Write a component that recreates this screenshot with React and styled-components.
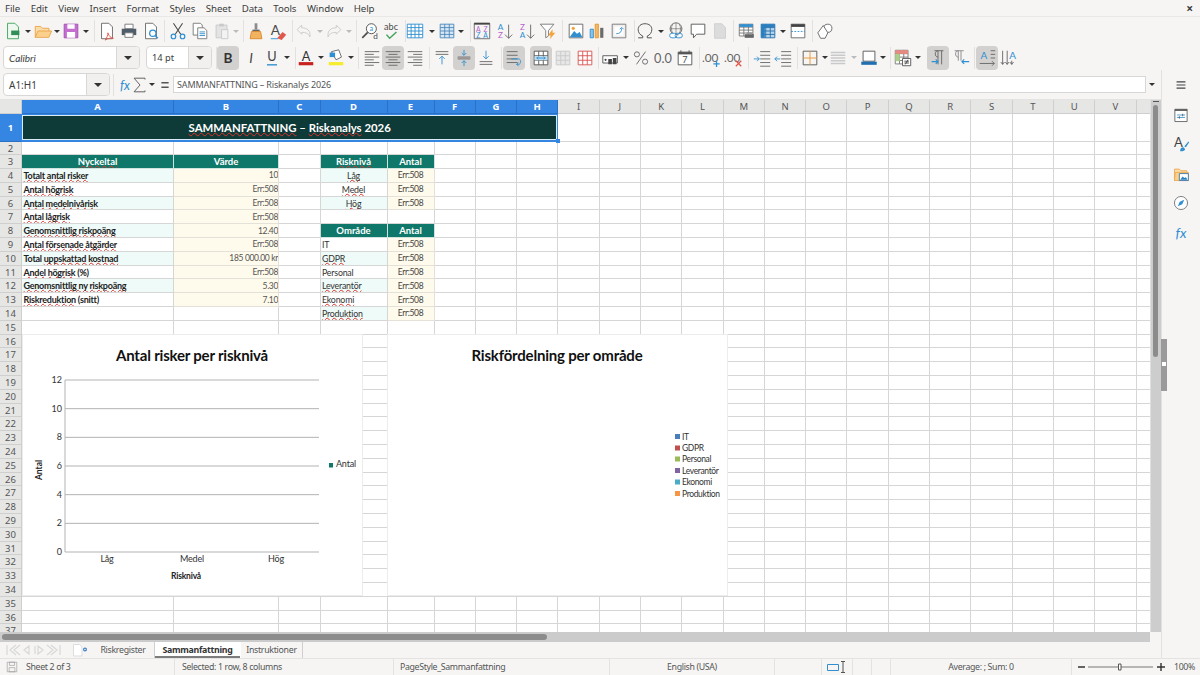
import React from "react";
import styled, { createGlobalStyle } from "styled-components";

const GlobalStyle = createGlobalStyle`
  html, body { margin: 0; padding: 0; background: #f6f5f4; }
  * { box-sizing: border-box; }
`;

const UI_FONT = `"Noto Sans", "Open Sans", sans-serif`;
const CELL_FONT = `Lato, "Noto Sans", sans-serif`;
const DARK = "#4a4a4a";
const BLUE = "#2f8fd1";
const FAINT = "#c9c9c9";

const Page = styled.div`
  width: 1200px;
  height: 675px;
  overflow: hidden;
  display: flex;
  flex-direction: column;
  background: #f6f5f4;
  color: #3d3d3d;
  font-family: ${UI_FONT};
`;

const MenuBar = styled.div`
  height: 17px;
  flex: none;
  display: flex;
  align-items: center;
  gap: 10.5px;
  padding: 0 5px;
  font-size: 9.7px;
  letter-spacing: -0.08px;
  border-bottom: 1px solid #e9e8e6;
`;

const CloseMark = styled.span`
  margin-left: auto;
  margin-right: 2px;
  font-size: 12px;
  font-weight: 700;
`;

const Toolbar = styled.div`
  height: ${(p) => p.$h}px;
  flex: none;
  display: flex;
  align-items: center;
`;

const Slot = styled.div`
  flex: none;
  width: ${(p) => p.$w}px;
  margin-left: ${(p) => p.$gap}px;
  height: 24px;
  display: flex;
  align-items: center;
  justify-content: center;
  border-radius: 4px;
  background: ${(p) => (p.$active ? "#d3d1cf" : "transparent")};
`;

const Caret = styled.span`
  width: 0;
  height: 0;
  border-left: 3px solid transparent;
  border-right: 3px solid transparent;
  border-top: 3.5px solid ${(p) => (p.$off ? "#bbb" : "#333")};
`;

const Sep = styled.span`
  width: 1px;
  height: 22px;
  background: #e2e1df;
`;

const Combo = styled.div`
  flex: none;
  display: flex;
  width: ${(p) => p.$w}px;
  height: 23px;
  margin-left: ${(p) => p.$gap}px;
  background: #fff;
  border: 1px solid #d8d7d5;
  border-radius: 4px;
  overflow: hidden;
`;

const ComboText = styled.div`
  flex: 1;
  display: flex;
  align-items: center;
  padding-left: 5px;
  font-size: ${(p) => p.$size || 10}px;
  font-family: ${(p) => p.$font || UI_FONT};
  font-style: ${(p) => (p.$italic ? "italic" : "normal")};
`;

const ComboButton = styled.div`
  flex: none;
  width: 23px;
  display: flex;
  align-items: center;
  justify-content: center;
  background: #f1f0ee;
  border-left: 1px solid #d8d7d5;
  ${Caret} {
    border-left-width: 4px;
    border-right-width: 4px;
    border-top-width: 4px;
  }
`;

const Body = styled.div`
  flex: 1;
  min-height: 0;
  display: flex;
`;

const WorkArea = styled.div`
  width: 1162px;
  flex: none;
  display: flex;
  flex-direction: column;
  border-right: 1px solid #e2e1df;
`;

const FormulaBar = styled.div`
  height: 30px;
  flex: none;
  display: flex;
  align-items: center;
  border-bottom: 1px solid #e4e3e1;
`;

const FormulaInput = styled.div`
  flex: none;
  width: 973px;
  height: 17px;
  margin-left: -2px;
  padding-left: 3px;
  display: flex;
  align-items: center;
  background: #fff;
  border: 1px solid #d8d7d5;
  font-size: 9px;
  letter-spacing: -0.15px;
  color: #555;
`;

const SheetRow = styled.div`
  flex: 1;
  min-height: 0;
  display: flex;
`;

const SheetPane = styled.div`
  position: relative;
  flex: 1;
  min-width: 0;
  overflow: hidden;
  background: #fff;
`;

const Grid = styled.div`
  display: grid;
  grid-template-columns: 22px 152px 105px 41.5px 67px 47px repeat(18, 41.3px);
  grid-template-rows: 14px 28px 13.3px repeat(35, 13.8px);
  font-family: ${CELL_FONT};
`;

const HeaderCell = styled.div`
  display: flex;
  align-items: center;
  justify-content: center;
  overflow: hidden;
  font-family: ${UI_FONT};
  font-size: 9.5px;
  background: ${(p) => (p.$selected ? "#3585e2" : "#e6e6e5")};
  color: ${(p) => (p.$selected ? "#fff" : "#555")};
  font-weight: ${(p) => (p.$selected ? 700 : 400)};
  border-right: 1px solid ${(p) => (p.$selected ? "#2a70c4" : "#cfcfcf")};
  border-bottom: 1px solid ${(p) => (p.$selected ? "#2a70c4" : "#cfcfcf")};
`;

const Cell = styled.div`
  display: flex;
  align-items: center;
  justify-content: ${(p) => p.$justify || "flex-start"};
  min-width: 0;
  overflow: hidden;
  white-space: nowrap;
  padding: 0 ${(p) => (p.$justify === "flex-end" ? 0 : 1.5)}px;
  font-size: ${(p) => p.$size || 8.8}px;
  letter-spacing: ${(p) => p.$ls ?? -0.2}px;
  font-weight: ${(p) => (p.$bold ? 700 : 400)};
  color: ${(p) => p.$color || "#333"};
  background: ${(p) => p.$bg || "#fff"};
  border-right: 1px solid ${(p) => p.$line || "#d6d6d6"};
  border-bottom: 1px solid ${(p) => p.$line || "#d6d6d6"};
  grid-column: ${(p) => (p.$span ? `span ${p.$span}` : "auto")};
`;

const Spell = styled.span`
  text-decoration: underline wavy #e0302a 1px;
  text-underline-offset: 0;
  text-decoration-skip-ink: none;
`;

const Selection = styled.div`
  position: absolute;
  left: 21px;
  top: 14px;
  width: 537px;
  height: 28px;
  border: 1px solid #3585e2;
  border-bottom-width: 2px;
  box-shadow: inset 0 0 0 1px #d9ecf6;
  pointer-events: none;
  &::after {
    content: "";
    position: absolute;
    right: -3px;
    bottom: -3px;
    width: 4px;
    height: 4px;
    background: #3585e2;
  }
`;

const ChartFrame = styled.svg`
  position: absolute;
  top: 235px;
  left: ${(p) => p.$left}px;
  width: 339px;
  height: 260px;
  background: #fff;
  outline: 1px solid #ececec;
  font-family: ${CELL_FONT};
`;

const VScroll = styled.div`
  position: relative;
  flex: none;
  width: 11px;
  background: #cdcdcd;
  border-left: 1px solid #e0e0e0;
  &::before {
    content: "";
    position: absolute;
    left: 2px;
    top: 1px;
    width: 6px;
    height: 1px;
    background: #555;
  }
`;

const VThumb = styled.div`
  position: absolute;
  left: 2px;
  top: 5px;
  width: 5px;
  height: 252px;
  border-radius: 3px;
  background: #8c8c8c;
`;

const HScroll = styled.div`
  position: relative;
  height: 10px;
  flex: none;
  background: #cbcbcb;
  margin-right: 11px;
`;

const HThumb = styled.div`
  position: absolute;
  left: 2px;
  top: 2px;
  width: 545px;
  height: 6px;
  border-radius: 3px;
  background: #8c8c8c;
`;

const TabBar = styled.div`
  height: 16px;
  flex: none;
  display: flex;
  align-items: stretch;
  font-size: 8.8px;
  letter-spacing: -0.3px;
`;

const TabNav = styled.svg`
  flex: none;
  width: 92px;
  height: 16px;
`;

const Tab = styled.div`
  flex: none;
  width: ${(p) => p.$w}px;
  display: flex;
  align-items: center;
  justify-content: center;
  background: ${(p) => (p.$active ? "#fff" : "transparent")};
  font-weight: ${(p) => (p.$active ? 700 : 400)};
  color: ${(p) => (p.$active ? "#333" : "#555")};
  box-shadow: ${(p) => (p.$active ? "inset 0 -2px 0 #7d7d7d" : "none")};
  border-right: 1px solid ${(p) => (p.$active ? "transparent" : "#cfcfcf")};
`;

const Sidebar = styled.div`
  flex: 1;
  position: relative;
  display: flex;
  flex-direction: column;
  align-items: center;
  padding-top: 4px;
  gap: 7.5px;
`;

const SideIcon = styled.div`
  width: 22px;
  height: 22px;
  display: flex;
  align-items: center;
  justify-content: center;
`;

const SideHandle = styled.div`
  position: absolute;
  left: -1px;
  top: 269px;
  width: 6px;
  height: 52px;
  background: #9a9a9a;
  &::after {
    content: "";
    position: absolute;
    left: 1px;
    top: 23px;
    width: 4px;
    height: 4px;
    background: #fff;
  }
`;

const StatusBar = styled.div`
  height: 17px;
  flex: none;
  display: flex;
  align-items: center;
  border-top: 1px solid #e4e3e1;
  font-size: 8.8px;
  letter-spacing: -0.35px;
  color: #555;
`;

const StatusCell = styled.div`
  flex: none;
  width: ${(p) => p.$w}px;
  height: 100%;
  display: flex;
  align-items: center;
  gap: ${(p) => p.$gapX || 7}px;
  padding-left: ${(p) => p.$pad || 0}px;
  justify-content: ${(p) => (p.$center ? "center" : "flex-start")};
  border-right: ${(p) => (p.$plain ? "none" : "1px solid #e4e3e1")};
`;

const Svg = ({ children, size = 22, vb = "0 0 22 22" }) => (
  <svg width={size} height={size} viewBox={vb} fill="none">
    {children}
  </svg>
);

const hl = (ys, x1, x2) => ys.map((y) => `M${x1} ${y}H${x2}`).join("");
const gridD = (x, y, w, h, nx, ny) => {
  let d = `M${x} ${y}h${w}v${h}h-${w}z`;
  for (let i = 1; i < nx; i++) d += `M${x + (w * i) / nx} ${y}v${h}`;
  for (let i = 1; i < ny; i++) d += `M${x} ${y + (h * i) / ny}h${w}`;
  return d;
};
const T = ({ x, y, s = 9, c = DARK, w = 400, i, children }) => (
  <text x={x} y={y} fontSize={s} fill={c} fontWeight={w} fontStyle={i ? "italic" : "normal"} fontFamily="Lato, sans-serif" textAnchor="middle">
    {children}
  </text>
);

const DOC = "M5 2.5h8L17 6.5v13H5z";

const icons = {
  newDoc: <><path d={DOC} fill="#eef8f0" stroke="#3fa35b" /><path d="M9 10.5h9v5H9z" fill="#2f8f55" /></>,
  open: <><path d="M2.5 18V6h6l2 2h7v3" fill="#fbdca8" stroke="#e8a548" /><path d="M2.5 18l3-7h15l-3 7z" fill="#fbd08c" stroke="#e8a548" /></>,
  save: <><path d="M3.5 3.5h15v15h-15z" fill="#c46fd0" stroke="#a14fb0" /><path d="M7 3.5h8v5H7zM6.5 12h9v6.5h-9z" fill="#fff" /></>,
  pdf: <><path d={DOC} fill="#fff" stroke="#666" /><path d="M12 13c1 4 3 5 6 6-3-.5-6 0-9 2 2-3 3-5 3-8z" stroke="#e2574c" /></>,
  print: <><path d="M6.5 3.5h9v5h-9z" fill="#fff" stroke="#777" /><path d="M3 8.5h16v7H3z" fill="#4f5d6b" /><path d="M6.5 13h9v5h-9z" fill="#fff" stroke="#777" /></>,
  preview: <><path d={DOC} fill="#fff" stroke="#666" /><circle cx="13" cy="13.5" r="3.5" fill="#fff" stroke={BLUE} strokeWidth="1.4" /><path d="M15.5 16l3 3" stroke={BLUE} strokeWidth="1.6" /></>,
  cut: <><path d="M6 2.5l8 12M16 2.5l-8 12" stroke={DARK} strokeWidth="1.2" /><circle cx="6" cy="17" r="2.5" stroke={BLUE} strokeWidth="1.3" /><circle cx="16" cy="17" r="2.5" stroke={BLUE} strokeWidth="1.3" /></>,
  copy: <><path d="M3.5 2.5h8l2 2v11h-10z" fill="#fff" stroke="#777" /><path d="M8.5 7.5h7l3 3v9h-10z" fill="#fff" stroke="#777" /><path d={hl([12, 14, 16], 10.5, 16.5)} stroke={BLUE} /></>,
  paste: <><path d="M4.5 4.5h12v14h-12z" fill="#e4e4e4" stroke={FAINT} /><path d="M8 3h5v3H8z" fill={FAINT} /><path d="M10.5 9.5h7v10h-7z" fill="#f2f2f2" stroke={FAINT} /></>,
  clone: <><path d="M9.5 2.5h3v7h-3z" fill="#8b8b8b" /><path d="M7 9.5h8v2H7z" fill="#666" /><path d="M6 11.5h10l1.5 8h-13z" fill="#f3b25f" stroke="#d9892c" /></>,
  clear: <><T x={8} y={15} s={15}>A</T><path d="M10 19l6-7 4 3-5 6z" fill="#e2574c" /><path d="M3 19.5h8" stroke={BLUE} /></>,
  undo: <path d="M3.5 9.5l5-5v3c6 0 10 3 9 10-1.5-4-5-5-9-5v2z" stroke={FAINT} />,
  redo: <path d="M18.5 9.5l-5-5v3c-6 0-10 3-9 10 1.5-4 5-5 9-5v2z" stroke={FAINT} />,
  find: <><circle cx="12.5" cy="8.5" r="5.5" fill="#fff" stroke={DARK} /><path d="M8.5 12.5l-6 6" stroke={DARK} strokeWidth="1.8" /><T x={12.5} y={11} s={8} c={BLUE}>a</T><T x={17} y={20} s={9}>d</T></>,
  spell: <><T x={11} y={10} s={10}>abc</T><path d="M6 15l3.5 4L17 12" stroke="#45a35c" strokeWidth="1.6" /></>,
  tableGrid: <path d={gridD(2.5, 3.5, 17, 15, 4, 4)} fill="#fff" stroke={BLUE} />,
  colGrid: <path d={gridD(3.5, 3.5, 15, 15, 3, 4)} fill="#d7e9f7" stroke="#4f87b8" />,
  sort: <><path d="M2.5 2.5h17v17h-17z" stroke="#666" /><path d="M2.5 3h17" stroke="#444" strokeWidth="2" /><T x={7} y={12} s={7.5} c="#b364c9">A</T><T x={15} y={12} s={7.5} c="#b364c9">Z</T><T x={7} y={19} s={7.5} c={BLUE}>Z</T><T x={15} y={19} s={7.5} c={BLUE}>A</T></>,
  az: <><T x={6} y={10} s={9} c={BLUE}>A</T><T x={6} y={19} s={9} c="#b364c9">Z</T><path d="M15 4v15m-4-4l4 4 4-4" stroke="#666" /></>,
  za: <><T x={6} y={10} s={9} c="#b364c9">Z</T><T x={6} y={19} s={9} c={BLUE}>A</T><path d="M15 4v15m-4-4l4 4 4-4" stroke="#666" /></>,
  filter: <><path d="M2.5 3.5h15l-6 7v6l-3 2v-8z" fill="#fff" stroke="#777" /><path d="M16 9l-5 7h3l-1 4 6-7h-3z" fill="#f2a33c" /></>,
  image: <><path d="M3.5 3.5h15v15h-15z" fill="#fff" stroke="#666" /><path d="M4 18l5-7 3 3 3-2 3 6z" fill={BLUE} /><circle cx="8" cy="8" r="1.8" fill="#f2a33c" /></>,
  chart: <><path d="M3.5 9H7v9.5H3.5z" fill="#8fc2e6" stroke={BLUE} /><path d="M9 3.5h3.5v15H9z" fill="#f2b866" stroke="#e8962e" /><path d="M14.5 7.5H18v11h-3.5z" fill="#6b6b6b" /></>,
  pivot: <><path d="M3.5 3.5h15v15h-15z" fill="#eee" stroke="#777" /><path d="M6 6h10v10H6z" fill="#fff" /><path d="M8 14c4 0 6-2 6-6m-2 1l2-2 2 2" stroke={BLUE} /></>,
  omega: <path d="M3.5 18.5h5v-2c-3-1-5-4-5-7 0-4 3-6.5 7.5-6.5s7.5 2.5 7.5 6.5c0 3-2 6-5 7v2h5" stroke="#555" strokeWidth="1.1" />,
  link: <><circle cx="11" cy="8.5" r="6.5" stroke="#666" /><path d="M4.5 8.5h13M11 2v13M7.5 3.5c-2 3-2 7 0 10M14.5 3.5c2 3 2 7 0 10" stroke="#666" strokeWidth=".7" /><rect x="4" y="13.5" width="8" height="5" rx="2.5" stroke={BLUE} fill="#fff" /><rect x="10" y="13.5" width="8" height="5" rx="2.5" stroke={BLUE} /></>,
  comment: <path d="M3.5 3.5h15v11h-9l-3.5 4v-4H3.5z" fill="#fff" stroke="#555" />,
  note: <path d="M5 3h8l4 4v12H5z" fill="#dcdcdc" stroke="#cfcfcf" />,
  headers: <><path d={gridD(2.5, 3.5, 15, 13, 3, 4)} fill="#fff" stroke="#777" /><path d="M2.5 3.5h15v3h-15z" fill={BLUE} /><path d="M8.5 14.5h10v4h-10z" fill="#666" /><path d="M10.5 12.5h6v2h-6z" fill="#999" /></>,
  freeze: <><path d={gridD(3.5, 3.5, 15, 15, 3, 4)} fill="#b5d6ef" stroke="#2a6fa8" /><path d="M3.5 3.5h15v3h-15zM3.5 3.5h4v15h-4z" fill="#2a7fc0" /></>,
  split: <><path d="M3.5 3.5h15v15h-15z" fill="#fff" stroke="#666" /><path d="M3.5 3.5h15v3h-15z" fill="#444" /><path d="M3.5 11.5h15" stroke={BLUE} strokeDasharray="2 1.5" /></>,
  shapes: <><circle cx="13" cy="8" r="4.5" stroke="#666" fill="#fff" /><path d="M8 5l5 8-3 6H5l-3-6z" fill="#fff" stroke="#666" /></>,
  bold: <T x={11} y={16} s={15} w={700} c="#333">B</T>,
  italic: <T x={11} y={16} s={15} i c="#444">I</T>,
  underline: <><T x={11} y={14.5} s={14} c="#444">U</T><path d="M5.5 18.5h11" stroke={BLUE} strokeWidth="1.5" /></>,
  fontColor: <><T x={11} y={14} s={14} c="#333">A</T><path d="M3 15.5h16V19H3z" fill="#c9211e" /></>,
  highlight: <><path d="M6 4l8-2 3 8-6 3z" fill="#fff" stroke="#666" /><path d="M4 5h6v5H4z" fill={BLUE} /><path d="M3 15.5h16V19H3z" fill="#f5ec2a" /></>,
  alignL: <path d={`${hl([4, 10, 16], 3, 19)}${hl([7, 13, 19], 3, 13)}`} stroke="#666" />,
  alignC: <path d={`${hl([4, 10, 16], 3, 19)}${hl([7, 13, 19], 6, 16)}`} stroke="#666" />,
  alignR: <path d={`${hl([4, 10, 16], 3, 19)}${hl([7, 13, 19], 9, 19)}`} stroke="#666" />,
  top: <><path d={hl([4, 7], 4, 18)} stroke="#666" /><path d="M11 18V9m-3 3l3-3 3 3" stroke={BLUE} /></>,
  mid: <><path d={hl([10, 12], 4, 18)} stroke="#666" /><path d="M11 2v6M8.5 5.5L11 8l2.5-2.5M11 20v-6M8.5 16.5L11 14l2.5 2.5" stroke={BLUE} /></>,
  bottom: <><path d={hl([15, 18], 4, 18)} stroke="#666" /><path d="M11 3v9M8 9l3 3 3-3" stroke={BLUE} /></>,
  wrap: <><path d={hl([4, 8, 12, 16], 3, 15)} stroke="#666" /><path d="M8 12h8c3 0 3 6 0 6h-2m2-2l-2 2 2 2" stroke={BLUE} /></>,
  merge: <><path d={gridD(3.5, 3.5, 15, 15, 3, 3)} fill="#fff" stroke="#555" /><path d="M4 9h14v4.5H4z" fill="#bcdcf2" /><path d="M6 11h10m-8-1.5L6.5 11 8 12.5m6-3 1.5 1.5-1.5 1.5" stroke={BLUE} /></>,
  mergeOff: <path d={gridD(3.5, 3.5, 15, 15, 3, 3)} fill="#e7e7e7" stroke={FAINT} />,
  splitRed: <path d={gridD(3.5, 3.5, 15, 15, 3, 3)} stroke="#d9534f" fill="#fff" />,
  numFormat: <><path d="M2 8.5h16v8H2z" stroke="#555" fill="#fff" /><path d="M8 12h4v6H8zM13 11h4v7h-4z" fill="#444" /><circle cx="5" cy="13" r="1.2" fill="#444" /></>,
  percent: <><circle cx="6.5" cy="7" r="2.8" stroke="#666" /><circle cx="15.5" cy="15" r="2.8" stroke="#666" /><path d="M16 4L6 18" stroke="#666" /></>,
  decimal: <T x={11} y={16} s={14} c="#666">0.0</T>,
  date: <><path d="M3.5 4.5h15v14h-15z" fill="#fff" stroke="#555" /><path d="M3.5 4.5h15V7h-15z" fill="#555" /><path d="M6.5 2.5v3M15.5 2.5v3" stroke="#555" /><T x={11} y={16.5} s={10}>7</T></>,
  addDec: <><T x={9} y={15} s={13} c="#666">.00</T><path d="M16 14v7M12.5 17.5h7" stroke={BLUE} strokeWidth="1.4" /></>,
  delDec: <><T x={9} y={15} s={13} c="#666">.00</T><path d="M13 14l6 6M19 14l-6 6" stroke="#e2574c" strokeWidth="1.4" /></>,
  indent: <><path d={hl([4, 8, 12, 16, 20], 9, 20)} stroke="#666" /><path d="M2 12h6M5.5 9.5L8 12l-2.5 2.5" stroke={BLUE} /></>,
  outdent: <><path d={hl([4, 8, 12, 16, 20], 9, 20)} stroke="#666" /><path d="M8 12H2M4.5 9.5L2 12l2.5 2.5" stroke={BLUE} /></>,
  borders: <><path d="M3.5 3.5h15v15h-15z" stroke="#555" /><path d="M11 3.5v15M3.5 11h15" stroke="#e8962e" /></>,
  lineStyle: <path d={hl([5, 8, 11, 14, 17], 3, 19)} stroke={FAINT} strokeWidth="1.5" />,
  borderColor: <><path d="M4.5 3.5h13v11h-13z" fill="#fff" stroke="#555" /><path d="M2.5 15h17v3.5h-17z" fill="#1f6fb2" /></>,
  cond: <><path d={gridD(2.5, 2.5, 14, 15, 3, 4)} fill="#fff" stroke="#777" /><path d="M2.5 2.5h14v4h-14z" fill="#e88a80" /><path d="M2.5 6.5h5v8h-5z" fill="#a9cf8b" /><path d="M10.5 11.5h9v8h-9z" fill="#fff" stroke="#555" /><path d="M12.5 14.5h5M12.5 16.5h5M16.5 13l-3 5" stroke="#444" /></>,
  ltr: <><path d="M11 18V3M15 18V3M7 3h10M11 3C7 3 7 10 11 10" stroke="#666" /><path d="M4 15h7M8.5 12.5L11 15l-2.5 2.5" stroke={BLUE} strokeWidth="1.2" /></>,
  rtl: <><path d="M8 14V3M11 14V3M4 3h10M8 3C4 3 4 10 8 10" stroke="#888" /><path d="M20 15h-8M14.5 12.5L12 15l2.5 2.5" stroke={BLUE} strokeWidth="1.2" /></>,
  ltrText: <><T x={7.5} y={12} s={11} c={BLUE}>A</T><path d="M15 3h5M15 7h5M15 11h5M3 17h16M16.5 14.5L19 17l-2.5 2.5" stroke="#666" /></>,
  vertText: <><T x={15} y={12} s={11} c={BLUE}>A</T><path d="M4 3v15M9 3v15M14 14v4M2 15.5L4 18l2-2.5M7 15.5L9 18l2-2.5M12 15.5l2 2.5 2-2.5" stroke="#666" /></>,
  hamburger: <path d={hl([6, 11, 16], 4, 18)} stroke="#444" strokeWidth="1.9" />,
  props: <><path d="M3.5 4h15v15h-15z" fill="#fff" stroke="#555" /><path d="M3.5 4h15v2h-15z" fill="#555" /><path d="M6 11h10M6 14h10" stroke={BLUE} /><path d="M13 9.5v3M9 12.5v3" stroke="#555" /></>,
  styles: <><T x={8} y={15} s={16} c="#444">A</T><path d="M10 20c0-4 2-5 4-5l2 2c0 2-2 3-6 3zM15 14l5-6 1 1-4 6z" fill={BLUE} /></>,
  gallery: <><path d="M3 19V5h6l2 2h7v2" fill="#fbdca8" stroke="#e8a548" /><path d="M3 19l1-10h16v10z" fill="#fbd08c" stroke="#e8a548" /><path d="M9 10.5h11V19H9z" fill="#fff" stroke="#2a6fa8" /><path d="M10 18l3-4 2 2 2-1 2 3z" fill="#2a7fc0" /></>,
  navigator: <><circle cx="11" cy="11" r="8" stroke="#666" fill="#fff" /><path d="M15 7l-2.5 5.5L7 15l2.5-5.5z" fill={BLUE} /></>,
  sideFx: <T x={11} y={17} s={17} i c={BLUE}>fx</T>,
  formulaFx: <T x={11} y={16} s={14} i c={BLUE}>fx</T>,
  sigma: <path d="M16.5 5V3.5h-12L11 11l-6.5 7.5h12V17" stroke="#555" />,
  equals: <path d="M7 8.5h8M7 13.5h8" stroke="#555" strokeWidth="1.8" />
};

const placed = (items, start = 0) => {
  let end = start;
  return items.map(([name, cx, active]) => {
    const w = name.startsWith("drop") ? 8 : name === "sep" ? 1 : active ? 22 : 20;
    const gap = cx - w / 2 - end;
    end = cx + w / 2;
    return { name, w, gap, active };
  });
};

const ToolItems = ({ items, start }) =>
  placed(items, start).map(({ name, w, gap, active }, i) => (
    <Slot key={i} $w={w} $gap={gap} $active={active}>
      {name === "drop" && <Caret />}
      {name === "dropOff" && <Caret $off />}
      {name === "sep" && <Sep />}
      {icons[name] && <Svg size={20}>{icons[name]}</Svg>}
    </Slot>
  ));

const TOP_TOOLS = [
  ["newDoc", 13], ["drop", 28], ["open", 43], ["drop", 57], ["save", 71], ["drop", 86], ["sep", 94],
  ["pdf", 107], ["print", 129], ["preview", 151], ["sep", 164], ["cut", 178], ["copy", 200], ["paste", 222],
  ["dropOff", 236], ["sep", 243], ["clone", 256], ["clear", 278], ["sep", 292], ["undo", 304], ["dropOff", 320],
  ["redo", 334], ["dropOff", 349], ["sep", 356], ["find", 370], ["spell", 391], ["sep", 405], ["tableGrid", 415],
  ["drop", 432], ["colGrid", 447], ["drop", 461], ["sep", 470], ["sort", 482], ["az", 505], ["za", 527],
  ["filter", 548], ["sep", 562], ["image", 576], ["chart", 597], ["pivot", 619], ["sep", 634], ["omega", 645],
  ["drop", 661], ["link", 676], ["comment", 698], ["note", 720], ["sep", 733], ["headers", 747], ["freeze", 768],
  ["drop", 783], ["split", 798], ["sep", 812], ["shapes", 826]
];

const FORMAT_TOOLS = [
  ["sep", 216], ["bold", 228, true], ["italic", 251], ["underline", 272], ["drop", 287], ["sep", 295],
  ["fontColor", 306], ["drop", 321], ["highlight", 336], ["drop", 351], ["sep", 358], ["alignL", 372],
  ["alignC", 393, true], ["alignR", 415], ["sep", 429], ["top", 442], ["mid", 464, true], ["bottom", 486],
  ["sep", 501], ["wrap", 514, true], ["merge", 541, true], ["mergeOff", 563], ["splitRed", 585], ["sep", 598],
  ["numFormat", 611], ["drop", 626], ["percent", 641], ["decimal", 663], ["date", 685], ["sep", 699],
  ["addDec", 712], ["delDec", 734], ["sep", 748], ["indent", 762], ["outdent", 783], ["sep", 797],
  ["borders", 810], ["drop", 825], ["lineStyle", 838], ["dropOff", 854], ["borderColor", 869], ["drop", 883],
  ["sep", 890], ["cond", 903], ["drop", 918], ["sep", 927], ["ltr", 938, true], ["rtl", 961], ["sep", 974],
  ["ltrText", 987, true], ["vertText", 1009]
];

const FORMULA_TOOLS = [["sep", 113], ["formulaFx", 125], ["sigma", 140], ["drop", 152], ["equals", 165]];

const MENU = ["File", "Edit", "View", "Insert", "Format", "Styles", "Sheet", "Data", "Tools", "Window", "Help"];
const COLUMNS = "ABCDEFGHIJKLMNOPQRSTUVW".split("");
const SIDE_ICONS = ["hamburger", "props", "styles", "gallery", "navigator", "sideFx"];

const TEAL = "#10786a";
const MINT = "#eefbf8";
const CREAM = "#fffbec";
const ERR = "Err:508";

const head = (text) => ({ text, $bg: TEAL, $color: "#fff", $bold: true, $justify: "center", $line: "#cfe3df", $size: 9.5, $ls: 0 });
const keyCell = (text, i) => ({ text, $bg: i % 2 === 0 ? MINT : "#fff", $bold: true, $color: "#222", $size: 9, $ls: -0.25 });
const valueCell = (text) => ({ text, $bg: CREAM, $justify: "flex-end", $color: "#555", $line: "#e4e2d8", $size: 8.5, $ls: -0.35 });
const areaCell = (text, i) => ({ text, $bg: i % 2 === 1 ? MINT : "#fff" });
const countCell = () => ({ text: ERR, $bg: CREAM, $justify: "center", $color: "#444", $line: "#e4e2d8", $size: 8.5, $ls: -0.35 });

const sp = (word) => <Spell>{word}</Spell>;

const KEY_FIGURES = [
  [sp("Totalt antal risker"), "10"],
  [sp("Antal högrisk"), ERR],
  [sp("Antal medelnivårisk"), ERR],
  [sp("Antal lågrisk"), ERR],
  [sp("Genomsnittlig riskpoäng"), "12.40"],
  [sp("Antal försenade åtgärder"), ERR],
  [<>Total {sp("uppskattad kostnad")}</>, "185 000.00 kr"],
  [<>{sp("Andel högrisk")} (%)</>, ERR],
  [sp("Genomsnittlig ny riskpoäng"), "5.30"],
  [<>{sp("Riskreduktion")} (snitt)</>, "7.10"]
];

const AREAS = ["IT", sp("GDPR"), "Personal", sp("Leverantör"), sp("Ekonomi"), sp("Produktion")];
const LEVELS = [sp("Låg"), sp("Medel"), sp("Hög")];

const buildCells = () => {
  const cells = {
    A3: head(sp("Nyckeltal")),
    B3: head("Värde"),
    D3: head(sp("Risknivå")),
    E3: head("Antal"),
    D8: head("Område"),
    E8: head("Antal")
  };
  KEY_FIGURES.forEach(([label, value], i) => {
    cells[`A${i + 4}`] = keyCell(label, i);
    cells[`B${i + 4}`] = valueCell(value);
  });
  LEVELS.forEach((level, i) => {
    cells[`D${i + 4}`] = { text: level, $bg: i % 2 === 0 ? MINT : "#fff", $justify: "center" };
    cells[`E${i + 4}`] = countCell();
  });
  AREAS.forEach((area, i) => {
    cells[`D${i + 9}`] = areaCell(area, i);
    cells[`E${i + 9}`] = countCell();
  });
  return cells;
};

const CELLS = buildCells();

const SheetGrid = () => (
  <Grid>
    <HeaderCell />
    {COLUMNS.map((col, i) => (
      <HeaderCell key={col} $selected={i < 8}>{col === "W" ? "" : col}</HeaderCell>
    ))}
    {Array.from({ length: 37 }, (_, r) => r + 1).map((row) => (
      <React.Fragment key={row}>
        <HeaderCell $selected={row === 1}>{row}</HeaderCell>
        {row === 1 && (
          <Cell $span={8} $bg="#0e3b38" $color="#fff" $bold $size={11.4} $ls={0} $justify="center" $line="#0e3b38">
            <span>{sp("SAMMANFATTNING")} – {sp("Riskanalys")} 2026</span>
          </Cell>
        )}
        {COLUMNS.slice(row === 1 ? 8 : 0).map((col) => {
          const { text, ...style } = CELLS[`${col}${row}`] || {};
          return <Cell key={col} {...style}>{text && <span>{text}</span>}</Cell>;
        })}
      </React.Fragment>
    ))}
  </Grid>
);

const AXIS_VALUES = [0, 2, 4, 6, 8, 10, 12];
const yFor = (v) => 552 - (v * 172) / 12;

const LevelChart = () => (
  <ChartFrame $left={23} viewBox="23 335 339 260">
    <text x="192" y="361" fontSize="15" fontWeight="700" letterSpacing="-0.2" textAnchor="middle" fill="#111">Antal risker per risknivå</text>
    {AXIS_VALUES.map((v) => (
      <g key={v}>
        <path d={`M65 ${yFor(v)}H319`} stroke="#b3b3b3" />
        <text x="62" y={yFor(v) + 3} fontSize="9" textAnchor="end" fill="#333">{v}</text>
      </g>
    ))}
    <path d="M65 380V552" stroke="#b3b3b3" />
    {[["Låg", 107], ["Medel", 192], ["Hög", 276]].map(([label, x]) => (
      <text key={label} x={x} y="562" fontSize="9" letterSpacing="-0.2" textAnchor="middle" fill="#333">{label}</text>
    ))}
    <text x="186" y="579" fontSize="8.5" fontWeight="700" letterSpacing="-0.2" textAnchor="middle" fill="#222">Risknivå</text>
    <text transform="translate(42 470) rotate(-90)" fontSize="8.5" fontWeight="700" textAnchor="middle" fill="#222">Antal</text>
    <rect x="329" y="463" width="4" height="4.5" fill={TEAL} />
    <text x="336" y="467" fontSize="9" letterSpacing="-0.2" fill="#333">Antal</text>
  </ChartFrame>
);

const LEGEND = [
  ["IT", "#4a7ebb", 436.5], ["GDPR", "#c0504d", 448], ["Personal", "#9bbb59", 459], ["Leverantör", "#8064a2", 470.5],
  ["Ekonomi", "#4bacc6", 482], ["Produktion", "#f79646", 493.5]
];

const AreaChart = () => (
  <ChartFrame $left={388} viewBox="388 335 339 260">
    <text x="557" y="361" fontSize="15" fontWeight="700" letterSpacing="-0.2" textAnchor="middle" fill="#111">Riskfördelning per område</text>
    {LEGEND.map(([label, color, y]) => (
      <g key={label}>
        <rect x="675" y={y - 2.5} width="5" height="5" fill={color} />
        <text x="682" y={y + 3} fontSize="8.5" letterSpacing="-0.35" fill="#333">{label}</text>
      </g>
    ))}
  </ChartFrame>
);

const TabNavIcons = () => (
  <TabNav viewBox="0 0 92 16">
    <path d="M7 3v10M16 3L10 8l6 5M20 3l-6 5 6 5M29 4l-5 4 5 4zM35 4v8M38 4l5 4-5 4zM47 3l6 5-6 5M51 3l6 5-6 5M60 3v10" fill="none" stroke="#d8d8d8" strokeWidth="1.2" />
    <path d="M73.5 2.5h6L82 5v9h-8.5z" fill="#fff" stroke="#ddd" />
    <circle cx="85" cy="7.5" r="2" fill="#3d7fc4" />
    <circle cx="85" cy="7.5" r=".8" fill="#fff" />
  </TabNav>
);

const App = () => (
  <>
    <GlobalStyle />
    <Page>
      <MenuBar>
        {MENU.map((item) => <span key={item}>{item}</span>)}
        <CloseMark>×</CloseMark>
      </MenuBar>
      <Toolbar $h={28}>
        <ToolItems items={TOP_TOOLS} />
      </Toolbar>
      <Toolbar $h={25}>
        <Combo $w={137} $gap={3}>
          <ComboText $font={CELL_FONT} $italic>Calibri</ComboText>
          <ComboButton><Caret /></ComboButton>
        </Combo>
        <Combo $w={66} $gap={6}>
          <ComboText $size={9.3}>14 pt</ComboText>
          <ComboButton><Caret /></ComboButton>
        </Combo>
        <ToolItems items={FORMAT_TOOLS} start={212} />
      </Toolbar>
      <Body>
        <WorkArea>
          <FormulaBar>
            <Combo $w={107} $gap={3}>
              <ComboText>A1:H1</ComboText>
              <ComboButton><Caret /></ComboButton>
            </Combo>
            <ToolItems items={FORMULA_TOOLS} start={110} />
            <FormulaInput>SAMMANFATTNING – Riskanalys 2026</FormulaInput>
            <Slot $w={10} $gap={1}><Caret /></Slot>
          </FormulaBar>
          <SheetRow>
            <SheetPane>
              <SheetGrid />
              <Selection />
              <LevelChart />
              <AreaChart />
            </SheetPane>
            <VScroll><VThumb /></VScroll>
          </SheetRow>
          <HScroll><HThumb /></HScroll>
          <TabBar>
            <TabNavIcons />
            <Tab $w={63}>Riskregister</Tab>
            <Tab $w={86} $active>Sammanfattning</Tab>
            <Tab $w={62}>Instruktioner</Tab>
          </TabBar>
        </WorkArea>
        <Sidebar>
          <SideHandle />
          {SIDE_ICONS.map((name) => (
            <SideIcon key={name}><Svg size={name === "hamburger" ? 14 : 18}>{icons[name]}</Svg></SideIcon>
          ))}
        </Sidebar>
      </Body>
      <StatusBar>
        <StatusCell $w={175} $pad={5}>
          <Svg size={14}><path d="M3.5 3.5h15v15h-15z" stroke="#999" /><path d="M7 3.5h8v5H7zM6.5 12h9v6.5h-9z" stroke="#999" /></Svg>
          Sheet 2 of 3
        </StatusCell>
        <StatusCell $w={219} $pad={7}>Selected: 1 row, 8 columns</StatusCell>
        <StatusCell $w={216} $pad={6}>PageStyle_Sammanfattning</StatusCell>
        <StatusCell $w={165} $center>English (USA)</StatusCell>
        <StatusCell $w={47} />
        <StatusCell $w={31} $pad={5}>
          <Svg size={20} vb="0 0 20 14"><path d="M.5 4.5h11v6H.5z" stroke={BLUE} /><path d="M14 1.5h4M16 1.5v11M14 12.5h4" stroke="#555" /></Svg>
        </StatusCell>
        <StatusCell $w={19} />
        <StatusCell $w={19} />
        <StatusCell $w={181} $center>Average: ; Sum: 0</StatusCell>
        <StatusCell $w={128} $plain $pad={5} $gapX={5}>
          <Svg size={92} vb="0 0 92 16"><path d="M11 8h65" stroke="#777" /><path d="M1 8h7M80 8h8M84 4v8" stroke="#333" strokeWidth="1.4" /><path d="M41.5 5H44v6h-2.5z" fill="#fff" stroke="#555" /></Svg>
          <span>100%</span>
        </StatusCell>
      </StatusBar>
    </Page>
  </>
);

export default App;
